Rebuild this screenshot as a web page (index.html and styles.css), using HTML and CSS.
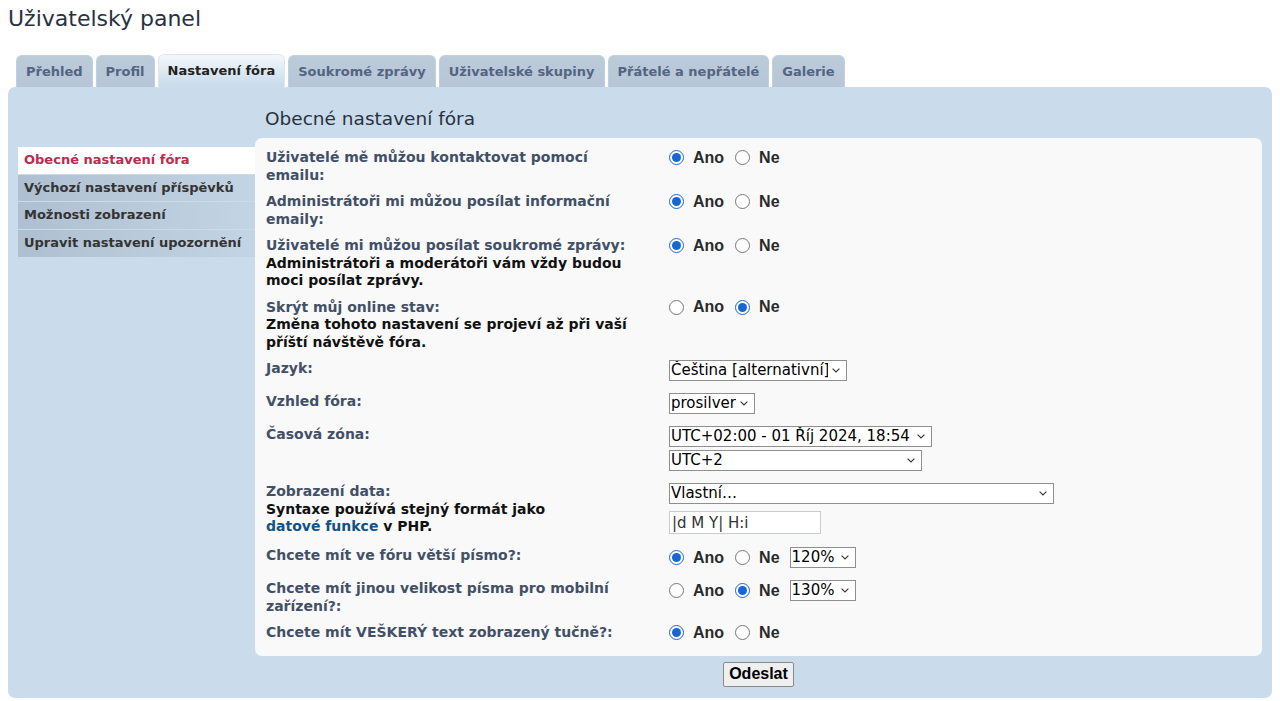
FILE: index.html
```html
<!DOCTYPE html>
<html lang="cs">
<head>
<meta charset="utf-8">
<title>Uživatelský panel</title>
<link rel="stylesheet" href="styles.css">
</head>
<body>
<h1 class="page-title">Uživatelský panel</h1>

<ul class="tabs">
  <li class="tab">Přehled</li>
  <li class="tab">Profil</li>
  <li class="tab active">Nastavení fóra</li>
  <li class="tab">Soukromé zprávy</li>
  <li class="tab">Uživatelské skupiny</li>
  <li class="tab">Přátelé a nepřátelé</li>
  <li class="tab">Galerie</li>
</ul>

<div class="panel">
  <h2 class="section-title">Obecné nastavení fóra</h2>

  <ul class="menu">
    <li class="menu-item active">Obecné nastavení fóra</li>
    <li class="menu-item">Výchozí nastavení příspěvků</li>
    <li class="menu-item">Možnosti zobrazení</li>
    <li class="menu-item">Upravit nastavení upozornění</li>
  </ul>

  <div class="box">
    <dl class="row">
      <dt>Uživatelé mě můžou kontaktovat pomocí emailu:</dt>
      <dd><div class="radios">
        <label class="opt"><input type="radio" name="r1" checked><span>Ano</span></label>
        <label class="opt"><input type="radio" name="r1"><span>Ne</span></label>
      </div></dd>
    </dl>
    <dl class="row">
      <dt>Administrátoři mi můžou posílat informační emaily:</dt>
      <dd><div class="radios">
        <label class="opt"><input type="radio" name="r2" checked><span>Ano</span></label>
        <label class="opt"><input type="radio" name="r2"><span>Ne</span></label>
      </div></dd>
    </dl>
    <dl class="row">
      <dt>Uživatelé mi můžou posílat soukromé zprávy:<br><span class="explain">Administrátoři a moderátoři vám vždy budou moci posílat zprávy.</span></dt>
      <dd><div class="radios">
        <label class="opt"><input type="radio" name="r3" checked><span>Ano</span></label>
        <label class="opt"><input type="radio" name="r3"><span>Ne</span></label>
      </div></dd>
    </dl>
    <dl class="row">
      <dt>Skrýt můj online stav:<br><span class="explain">Změna tohoto nastavení se projeví až při vaší příští návštěvě fóra.</span></dt>
      <dd><div class="radios">
        <label class="opt"><input type="radio" name="r4"><span>Ano</span></label>
        <label class="opt"><input type="radio" name="r4" checked><span>Ne</span></label>
      </div></dd>
    </dl>
    <dl class="row">
      <dt>Jazyk:</dt>
      <dd><select class="sel w-lang"><option>Čeština [alternativní]</option></select></dd>
    </dl>
    <dl class="row">
      <dt>Vzhled fóra:</dt>
      <dd><select class="sel w-style"><option>prosilver</option></select></dd>
    </dl>
    <dl class="row">
      <dt>Časová zóna:</dt>
      <dd>
        <select class="sel w-tz"><option>UTC+02:00 - 01 Říj 2024, 18:54</option></select>
        <select class="sel w-tz2"><option>UTC+2</option></select>
      </dd>
    </dl>
    <dl class="row">
      <dt>Zobrazení data:<br><span class="explain">Syntaxe používá stejný formát jako <a class="link" href="#">datové&nbsp;funkce</a> v PHP.</span></dt>
      <dd>
        <select class="sel w-date"><option>Vlastní…</option></select>
        <input class="inputbox" type="text" value="|d M Y| H:i">
      </dd>
    </dl>
    <dl class="row">
      <dt>Chcete mít ve fóru větší písmo?:</dt>
      <dd><div class="radios tall">
        <label class="opt"><input type="radio" name="r5" checked><span>Ano</span></label>
        <label class="opt"><input type="radio" name="r5"><span>Ne</span></label>
        <select class="sel w-size"><option>120%</option></select>
      </div></dd>
    </dl>
    <dl class="row">
      <dt>Chcete mít jinou velikost písma pro mobilní zařízení?:</dt>
      <dd><div class="radios tall">
        <label class="opt"><input type="radio" name="r6"><span>Ano</span></label>
        <label class="opt"><input type="radio" name="r6" checked><span>Ne</span></label>
        <select class="sel w-size"><option>130%</option></select>
      </div></dd>
    </dl>
    <dl class="row">
      <dt>Chcete mít VEŠKERÝ text zobrazený tučně?:</dt>
      <dd><div class="radios">
        <label class="opt"><input type="radio" name="r7" checked><span>Ano</span></label>
        <label class="opt"><input type="radio" name="r7"><span>Ne</span></label>
      </div></dd>
    </dl>
  </div>

  <div class="submit-row">
    <button class="button" type="button">Odeslat</button>
  </div>
</div>
</body>
</html>
```

FILE: styles.css
```css
html, body {
  background: #ffffff;
}
body {
  margin: 0 8px;
  font-family: "DejaVu Sans", Verdana, sans-serif;
  color: #28313f;
}
.page-title {
  margin: 6px 0 0 0;
  font-size: 22px;
  line-height: 26px;
  font-weight: normal;
  color: #28313f;
}

/* tabs */
.tabs {
  list-style: none;
  margin: 22px 0 -1px 8px;
  padding: 0;
  display: flex;
  align-items: flex-end;
  gap: 3px;
  position: relative;
  z-index: 1;
}
.tab {
  height: 32px;
  box-sizing: border-box;
  padding: 0 9px;
  margin-bottom: 1px;
  display: flex;
  align-items: center;
  font-size: 13px;
  font-weight: bold;
  color: #536482;
  background: linear-gradient(#bccbda, #b6c6d6);
  border: 1px solid #c2d0de;
  border-bottom: none;
  border-radius: 6px 6px 0 0;
}
.tab.active {
  height: 34px;
  margin-bottom: 0;
  padding-bottom: 3px;
  color: #222222;
  background: linear-gradient(#f4f8fc, #cadceb 90%);
  border-color: #dbe6ef;
}

/* panel */
.panel {
  background: #cadceb;
  border-radius: 7px;
  padding: 21px 10px 11px 10px;
  display: grid;
  grid-template-columns: 237px 1fr;
  grid-template-areas:
    ". title"
    "menu box"
    ". submit";
}
.section-title {
  grid-area: title;
  margin: 0 0 8px 0;
  padding-left: 10px;
  font-size: 18.5px;
  line-height: 22px;
  font-weight: normal;
  color: #28313f;
}

/* left menu */
.menu {
  grid-area: menu;
  list-style: none;
  margin: 9px 0 0 0;
  padding: 0;
}
.menu-item {
  height: 26.7px;
  box-sizing: border-box;
  padding: 4px 6px;
  line-height: 18px;
  margin-bottom: 1px;
  font-size: 13px;
  font-weight: bold;
  color: #333333;
  white-space: nowrap;
  background: linear-gradient(to right, #aebfd1, #c3d4e4);
}
.menu-item.active {
  background: #ffffff;
  color: #bc2a4d;
}

/* content box */
.box {
  grid-area: box;
  background: #f9f9f9;
  border-radius: 7px;
  padding: 11px 0 5px 11px;
}
.row {
  display: grid;
  grid-template-columns: 376px 1fr;
  column-gap: 27px;
  margin: 0 0 9px 0;
}
.row dt {
  font-size: 14px;
  line-height: 17.5px;
  font-weight: bold;
  color: #425067;
}
.row dd {
  margin: 0;
  display: flex;
  flex-direction: column;
  align-items: flex-start;
}
.explain {
  color: #111111;
}
.link {
  color: #105289;
  text-decoration: none;
}

.radios {
  display: flex;
  align-items: center;
  height: 17.5px;
}
.radios.tall {
  height: 21px;
  margin-bottom: 3px;
}
.opt {
  display: inline-flex;
  align-items: center;
  gap: 9px;
  margin-right: 11px;
  font-family: "Liberation Sans", Arial, sans-serif;
  font-size: 16px;
  font-weight: bold;
  color: #2a2a2a;
}
.opt input {
  width: 15px;
  height: 15px;
  margin: 0;
  accent-color: #1766d6;
}
.opt + .sel {
  margin-left: -1px;
}
.radios .sel {
  margin-bottom: 0;
}

.sel {
  -webkit-appearance: none;
  appearance: none;
  height: 21px;
  box-sizing: border-box;
  font-family: "DejaVu Sans", Verdana, sans-serif;
  font-size: 15px;
  line-height: 19px;
  color: #000000;
  background-color: #ffffff;
  background-image: url("data:image/svg+xml,%3Csvg xmlns='http://www.w3.org/2000/svg' width='8' height='5' viewBox='0 0 8 5'%3E%3Cpath d='M0.6 0.6 L4 4 L7.4 0.6' fill='none' stroke='%23333' stroke-width='1.1'/%3E%3C/svg%3E");
  background-repeat: no-repeat;
  background-position: right 6px center;
  background-size: 8px 5px;
  border: 1px solid #8f8f8f;
  border-radius: 0;
  padding: 0 18px 0 1px;
  margin: 0 0 3px 0;
}
.w-lang { width: 178px; }
.w-style { width: 86px; }
.w-tz { width: 263px; }
.w-tz2 { width: 253px; }
.w-date { width: 385px; margin-bottom: 7px; }
.w-size { width: 66px; }

.inputbox {
  width: 152px;
  height: 23px;
  box-sizing: border-box;
  margin: 0 0 4px 0;
  padding: 0 2px;
  font-family: "DejaVu Sans", Verdana, sans-serif;
  font-size: 15px;
  color: #333333;
  background: #ffffff;
  border: 1px solid #c7cdd3;
}

.submit-row {
  grid-area: submit;
  display: flex;
  justify-content: center;
  padding-top: 6px;
}
.button {
  height: 25px;
  padding: 0 5px;
  font-family: "Liberation Sans", Arial, sans-serif;
  font-size: 16px;
  font-weight: bold;
  color: #000000;
  background: #efefef;
  border: 1px solid #8a8a8a;
  border-radius: 2px;
}
```
